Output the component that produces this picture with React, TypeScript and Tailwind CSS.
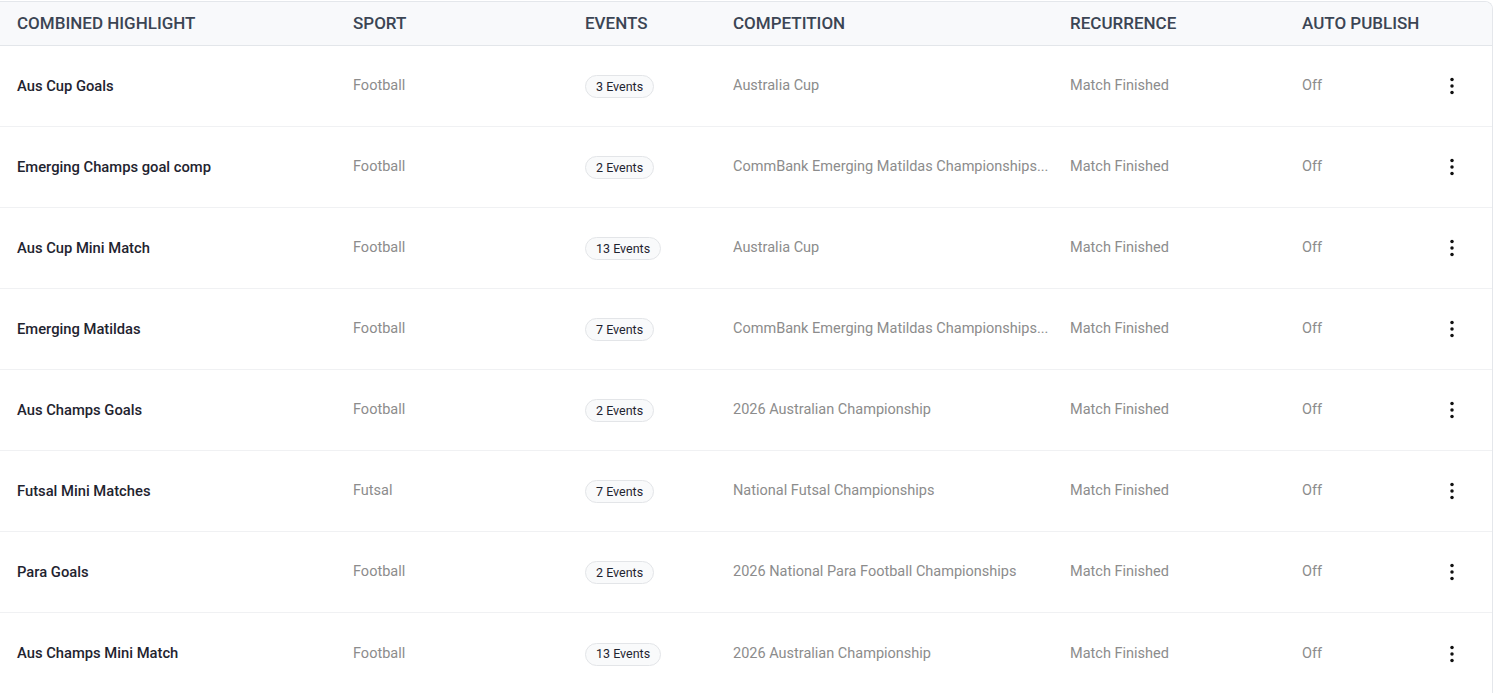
import React from "react";

type Row = { name: string; sport: string; events: string; comp: string };

const rows: Row[] = [
  { name: "Aus Cup Goals", sport: "Football", events: "3 Events", comp: "Australia Cup" },
  { name: "Emerging Champs goal comp", sport: "Football", events: "2 Events", comp: "CommBank Emerging Matildas Championships..." },
  { name: "Aus Cup Mini Match", sport: "Football", events: "13 Events", comp: "Australia Cup" },
  { name: "Emerging Matildas", sport: "Football", events: "7 Events", comp: "CommBank Emerging Matildas Championships..." },
  { name: "Aus Champs Goals", sport: "Football", events: "2 Events", comp: "2026 Australian Championship" },
  { name: "Futsal Mini Matches", sport: "Futsal", events: "7 Events", comp: "National Futsal Championships" },
  { name: "Para Goals", sport: "Football", events: "2 Events", comp: "2026 National Para Football Championships" },
  { name: "Aus Champs Mini Match", sport: "Football", events: "13 Events", comp: "2026 Australian Championship" },
];

function Dots() {
  return (
    <svg width="6" height="18" viewBox="0 0 6 18" className="text-[#111]">
      <circle cx="3" cy="2.6" r="1.75" fill="currentColor" />
      <circle cx="3" cy="9" r="1.75" fill="currentColor" />
      <circle cx="3" cy="15.4" r="1.75" fill="currentColor" />
    </svg>
  );
}

export default function App() {
  return (
    <div className="w-[1495px] h-[693px] overflow-hidden bg-white" style={{ fontFamily: "Roboto, 'Noto Sans', sans-serif" }}>
      <div className="mt-px w-[1493px] border-t border-r border-[#e4e7eb] rounded-tr-[8px] overflow-hidden">
        <div className="flex h-[44px] items-center bg-[#f8f9fb] border-b border-[#e3e6ea] text-[17px] font-medium text-[#3b4554]">
          <div className="w-[353px] pl-[17px]">COMBINED HIGHLIGHT</div>
          <div className="w-[232px]">SPORT</div>
          <div className="w-[148px]">EVENTS</div>
          <div className="w-[337px]">COMPETITION</div>
          <div className="w-[232px]">RECURRENCE</div>
          <div className="w-[150px]">AUTO PUBLISH</div>
        </div>
        {rows.map((r, i) => (
          <div
            key={i}
            className={`flex h-[81px] items-center ${i < rows.length - 1 ? "border-b border-[#f0f1f3]" : ""}`}
          >
            <div className="w-[353px] pl-[17px] text-[14.75px] font-medium text-[#1f2430]">{r.name}</div>
            <div className="w-[232px] text-[14.5px] text-[#8c8c8c]">{r.sport}</div>
            <div className="w-[148px]">
              <span className="inline-flex h-[23px] items-center rounded-full border border-[#e3e5e8] bg-[#f9fafb] px-[10px] text-[12.5px] text-[#1f2430]">
                {r.events}
              </span>
            </div>
            <div className="w-[337px] pr-[16px] text-[14.5px] text-[#8c8c8c] whitespace-nowrap overflow-hidden">{r.comp}</div>
            <div className="w-[232px] text-[14.5px] text-[#8c8c8c]">Match Finished</div>
            <div className="w-[147px] text-[14.5px] text-[#8c8c8c]">Off</div>
            <div className="flex w-[6px] justify-center">
              <Dots />
            </div>
          </div>
        ))}
      </div>
    </div>
  );
}
